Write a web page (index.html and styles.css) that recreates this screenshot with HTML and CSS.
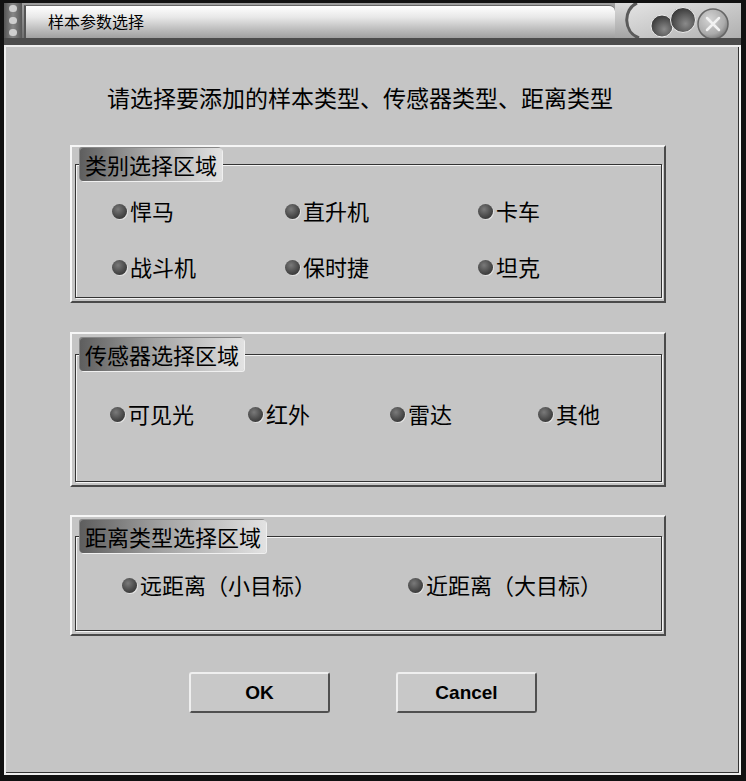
FILE: index.html
```html
<!DOCTYPE html>
<html lang="zh">
  <head>
    <meta charset="UTF-8" />
    <title>样本参数选择</title>
    <link rel="stylesheet" href="styles.css">
  </head>
  <body>
    <div class="window">
      <div class="titlebar">
        <div class="grip"><span></span><span></span><span></span></div>
        <div class="caption">样本参数选择</div>
        <svg class="controls" width="126" height="35" viewBox="0 0 126 35">
          <defs>
            <linearGradient id="bg" x1="0" y1="0" x2="0" y2="1">
              <stop offset="0" stop-color="#dcdcdc" />
              <stop offset="1" stop-color="#a4a4a4" />
            </linearGradient>
            <linearGradient id="face" x1="0" y1="0" x2="1" y2="1">
              <stop offset="0" stop-color="#e4e4e4" />
              <stop offset="1" stop-color="#b0b0b0" />
            </linearGradient>
            <radialGradient id="hole" cx="0.6" cy="0.65" r="0.7">
              <stop offset="0" stop-color="#8a8a8a" />
              <stop offset="0.6" stop-color="#555" />
              <stop offset="1" stop-color="#333" />
            </radialGradient>
            <radialGradient id="knob" cx="0.4" cy="0.35" r="0.7">
              <stop offset="0" stop-color="#d4d4d4" />
              <stop offset="0.7" stop-color="#ababab" />
              <stop offset="1" stop-color="#747474" />
            </radialGradient>
          </defs>
          <rect x="0" y="0" width="126" height="35" fill="url(#bg)" />
          <path d="M22 0 C8 6, 8 29, 24 35 L126 35 L126 0 Z" fill="url(#face)" />
          <path d="M22 0 C8 6, 8 29, 24 35" fill="none" stroke="#5a5a5a" stroke-width="3" />
          <circle cx="47" cy="23" r="11" fill="url(#hole)" stroke="#eee" stroke-width="1" />
          <circle cx="68" cy="17" r="12.5" fill="url(#hole)" stroke="#eee" stroke-width="1" />
          <circle cx="98" cy="21" r="15" fill="url(#knob)" stroke="#666" stroke-width="1.5" />
          <path d="M92 15 L104 27 M104 15 L92 27" stroke="#f2f2f2" stroke-width="2.5" stroke-linecap="round" />
        </svg>
      </div>
      <div class="client">
        <p class="prompt">请选择要添加的样本类型、传感器类型、距离类型</p>

        <div class="panel panel-kind">
          <fieldset>
            <legend>类别选择区域</legend>
            <div class="options kind">
              <label class="radio"><span class="dot"></span>悍马</label>
              <label class="radio"><span class="dot"></span>直升机</label>
              <label class="radio"><span class="dot"></span>卡车</label>
              <label class="radio"><span class="dot"></span>战斗机</label>
              <label class="radio"><span class="dot"></span>保时捷</label>
              <label class="radio"><span class="dot"></span>坦克</label>
            </div>
          </fieldset>
        </div>

        <div class="panel panel-sensor">
          <fieldset>
            <legend>传感器选择区域</legend>
            <div class="options sensor">
              <label class="radio"><span class="dot"></span>可见光</label>
              <label class="radio"><span class="dot"></span>红外</label>
              <label class="radio"><span class="dot"></span>雷达</label>
              <label class="radio"><span class="dot"></span>其他</label>
            </div>
          </fieldset>
        </div>

        <div class="panel panel-range">
          <fieldset>
            <legend>距离类型选择区域</legend>
            <div class="options range">
              <label class="radio"><span class="dot"></span>远距离（小目标）</label>
              <label class="radio"><span class="dot"></span>近距离（大目标）</label>
            </div>
          </fieldset>
        </div>

        <div class="buttons">
          <button class="button">OK</button>
          <button class="button">Cancel</button>
        </div>
      </div>
    </div>
  </body>
</html>
```

FILE: styles.css
```css
body {
  margin: 0;
  background: #000;
  font-family: "Noto Sans CJK SC", "Liberation Sans", sans-serif;
}
.window {
  width: 746px;
  height: 781px;
  box-sizing: border-box;
  border-style: solid;
  border-color: #111;
  border-width: 3px 5px 6px 4px;
  background: #c5c5c5;
  display: flex;
  flex-direction: column;
}
.titlebar {
  height: 35px;
  display: flex;
  background: linear-gradient(#a0a0a0, #707070);
  border-bottom: 7px solid #4c4c4c;
}
.grip {
  width: 18px;
  display: flex;
  flex-direction: column;
  align-items: center;
  justify-content: space-around;
  background: linear-gradient(to right, #555, #888 50%, #555);
}
.grip span {
  width: 8px;
  height: 7px;
  border-radius: 4px;
  background: #cfcfcf;
}
.caption {
  flex: 1;
  margin: 2px 0 0 2px;
  padding-left: 22px;
  border-left: 2px solid #555;
  border-top: 1px solid #666;
  border-top-right-radius: 6px;
  background: linear-gradient(#ffffff, #e8e8e8 35%, #b5b5b5 80%, #a0a0a0);
  font-size: 16px;
  line-height: 31px;
  color: #000;
}
.controls {
  display: block;
}
.client {
  flex: 1;
  border: 2px solid #eeeeee;
  border-right-color: #f4f4f4;
  box-shadow: inset -1px -1px 0 #333;
  display: flex;
  flex-direction: column;
}
.prompt {
  margin: 35px 0 0;
  padding-left: 101px;
  font-size: 23px;
  line-height: 30px;
  color: #000;
}
.panel {
  width: 596px;
  margin-left: 64px;
  box-sizing: border-box;
  display: flex;
  border: 2px solid;
  border-color: #f6f6f6 #4a4a4a #4a4a4a #f6f6f6;
  padding: 1px 2px 3px 3px;
}
.panel-kind {
  height: 158px;
  margin-top: 33px;
}
.panel-sensor {
  height: 155px;
  margin-top: 29px;
  padding-top: 4px;
}
.panel-range {
  height: 121px;
  margin-top: 28px;
  padding-top: 3px;
}
fieldset {
  flex: 1;
  margin: 0;
  padding: 0;
  border: 1px solid #333;
  box-shadow: 1px 1px 0 #f4f4f4, inset 1px 1px 0 #f4f4f4;
  min-width: 0;
}
legend {
  margin-left: 4px;
  padding: 0 5px;
  height: 33px;
  line-height: 32px;
  font-size: 22px;
  color: #000;
  border-radius: 3px;
  background: linear-gradient(to right, #5e5e5e, #a4a4a4 45%, #e2e2e2);
  box-shadow: 1px 1px 0 #f0f0f0, -1px -1px 0 #888;
}
.options {
  display: grid;
  align-items: center;
}
.kind {
  grid-template-columns: 173px 193px auto;
  row-gap: 26px;
  padding: 14px 0 0 36px;
}
.sensor {
  grid-template-columns: 138px 142px 148px auto;
  padding: 27px 0 0 34px;
}
.range {
  grid-template-columns: 286px auto;
  padding: 16px 0 0 46px;
}
.radio {
  display: flex;
  align-items: center;
  gap: 3px;
  height: 30px;
  font-size: 22px;
  color: #000;
}
.dot {
  width: 15px;
  height: 15px;
  margin-top: 3px;
  border-radius: 50%;
  background: radial-gradient(circle at 40% 35%, #7a7a7a, #4a4a4a 55%, #3a3a3a 75%, #9a9a9a);
  box-shadow: 1px 1px 0 #e0e0e0;
}
.buttons {
  display: flex;
  gap: 66px;
  margin: 36px 0 0 183px;
}
.button {
  width: 141px;
  height: 41px;
  box-sizing: border-box;
  border: 2px solid;
  border-color: #efefef #505050 #505050 #efefef;
  border-radius: 3px;
  background: #c8c8c8;
  font-family: "Liberation Sans", Arial, sans-serif;
  font-weight: bold;
  font-size: 19px;
  color: #000;
  cursor: pointer;
}
```
